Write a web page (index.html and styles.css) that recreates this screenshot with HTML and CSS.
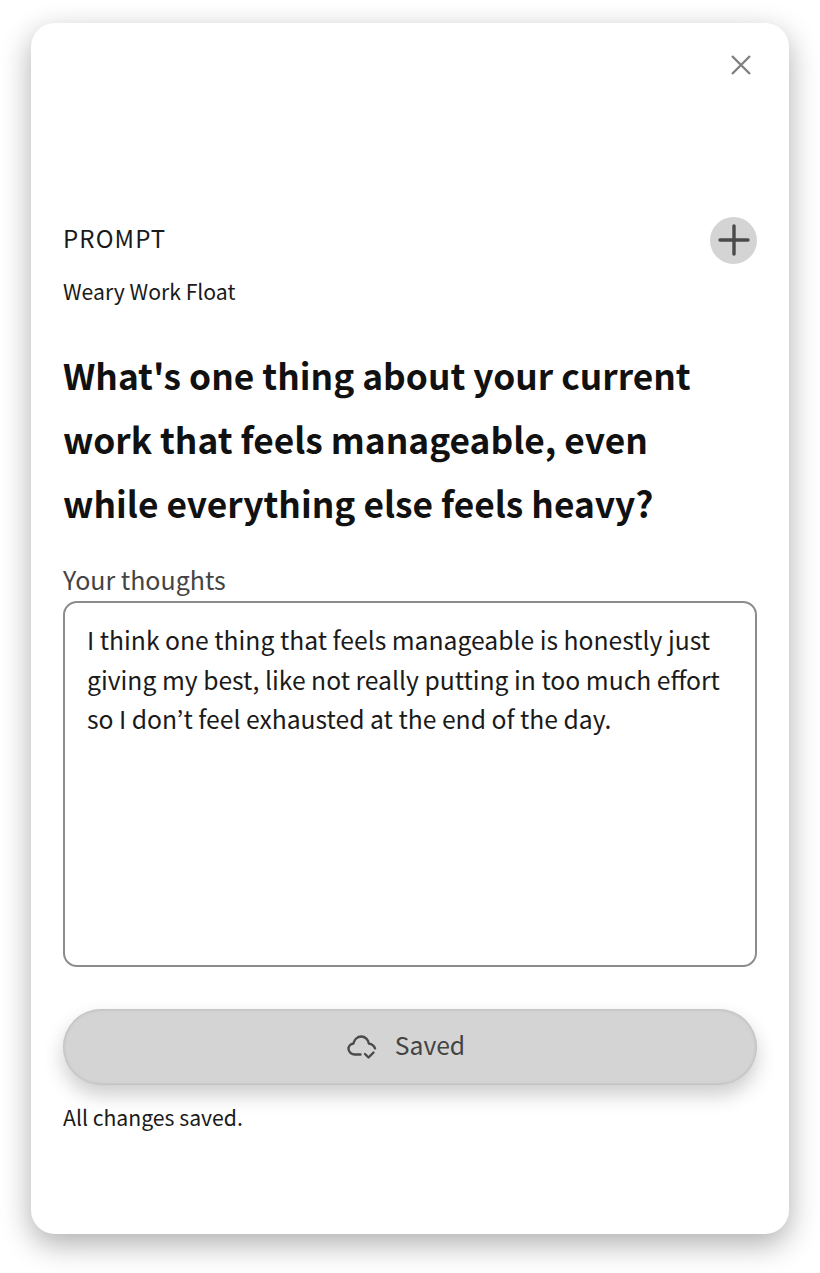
FILE: index.html
```html
<!DOCTYPE html>
<html lang="en">

<head>
    <meta charset="UTF-8">
    <meta name="viewport" content="width=device-width, initial-scale=1.0">
    <title>Prompt</title>
    <link rel="stylesheet" href="styles.css">
</head>

<body>
    <div class="card">
        <div class="close-row">
            <button class="close" aria-label="Close">
                <svg width="22" height="22" viewBox="0 0 22 22" fill="none" stroke="#808080" stroke-width="2.4">
                    <path d="M2 2L20 20M20 2L2 20" />
                </svg>
            </button>
        </div>

        <div class="prompt-head">
            <span class="prompt-label">PROMPT</span>
            <button class="add" aria-label="Add">
                <svg width="32" height="32" viewBox="0 0 32 32" fill="none" stroke="#4a4a4a" stroke-width="3.4" stroke-linecap="round">
                    <path d="M16 2V30M2 16H30" />
                </svg>
            </button>
        </div>
        <p class="prompt-name">Weary Work Float</p>

        <h1 class="question">What's one thing about your current work that feels manageable, even while everything else feels heavy?</h1>

        <label class="thoughts-label" for="thoughts">Your thoughts</label>
        <textarea class="thoughts" id="thoughts">I think one thing that feels manageable is honestly just giving my best, like not really putting in too much effort so I don’t feel exhausted at the end of the day.</textarea>

        <button class="saved">
            <svg width="30" height="26" viewBox="0 0 30 26" fill="none" stroke="#4a4a4a" stroke-width="2.4" stroke-linecap="round" stroke-linejoin="round">
                <path d="M13.5 20.5H8C4.5 20.5 1.5 18 1.5 14.8C1.5 12 3.6 9.8 6.4 9.5C7.3 5.6 10.4 2.5 14.2 2.5C18.2 2.5 21.4 5.6 21.9 9.6C24.6 9.9 27 11.7 28 14.4" />
                <path d="M18 20L21.5 23.5L26.5 18.5" />
            </svg>
            <span>Saved</span>
        </button>
        <p class="status">All changes saved.</p>
    </div>
</body>

</html>
```

FILE: styles.css
```css
* {
    box-sizing: border-box;
}

html,
body {
    height: 100%;
}

body {
    margin: 0;
    padding: 23px 31px 39px;
    background-color: #fff;
    font-family: "Noto Sans CJK KR", "Noto Sans", sans-serif;
    color: #1a1a1a;
}

.card {
    height: 1211px;
    padding: 0 32px;
    background-color: #fff;
    border-radius: 24px;
    box-shadow: 0 10px 30px rgba(0, 0, 0, 0.32);
}

.close-row {
    display: flex;
    justify-content: flex-end;
    padding-top: 31px;
    height: 193px;
}

.close {
    width: 22px;
    height: 22px;
    margin-right: 5px;
    padding: 0;
    border: 0;
    background: none;
}

.prompt-head {
    display: flex;
    justify-content: space-between;
    align-items: center;
    height: 48px;
}

.prompt-label {
    margin-top: -6px;
    font-size: 24px;
    letter-spacing: 1.1px;
}

.add {
    display: flex;
    align-items: center;
    justify-content: center;
    width: 47px;
    height: 47px;
    padding: 0;
    border: 0;
    border-radius: 50%;
    background-color: #d4d4d4;
}

.prompt-name {
    margin: 11px 0 0;
    font-size: 21.2px;
    line-height: 32px;
}

.question {
    margin: 36px 0 0;
    padding-right: 40px;
    font-size: 35.3px;
    font-weight: 700;
    line-height: 64.2px;
    color: #111;
}

.thoughts-label {
    display: block;
    margin-top: 26.4px;
    font-size: 25px;
    line-height: 34px;
    color: #444;
}

.thoughts {
    display: block;
    width: 100%;
    height: 366px;
    margin-top: 5px;
    padding: 17px 22px;
    border: 2px solid #8c8c8c;
    border-radius: 14px;
    outline: none;
    resize: none;
    font-family: inherit;
    font-size: 24.7px;
    line-height: 39.5px;
    color: #1a1a1a;
}

.saved {
    display: flex;
    align-items: center;
    justify-content: center;
    gap: 18px;
    width: 100%;
    height: 76px;
    margin-top: 42px;
    padding: 0 8px 6px 0;
    border: 0;
    border-radius: 38px;
    background-color: #d4d4d4;
    box-shadow: inset 0 0 3px 1px #bcbcbc, 0 10px 20px rgba(0, 0, 0, 0.2);
    font-family: inherit;
    font-size: 24.7px;
    color: #444;
}

.saved svg {
    margin-top: 6px;
}

.status {
    margin: 16px 0 0;
    font-size: 21.2px;
    line-height: 32px;
}
```
